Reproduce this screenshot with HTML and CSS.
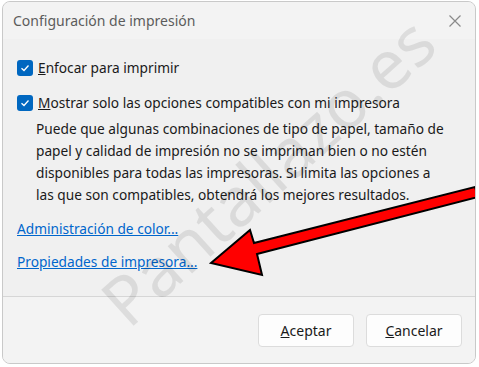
FILE: index.html
```html
<!DOCTYPE html>
<html>
<head>
  <title>Configuración de impresión</title>
  <link rel="stylesheet" href="styles.css">
</head>
<body>

  <div class="window">
    <!-- Title bar -->
    <div class="titlebar">
      <span class="title">Configuración de impresión</span>
      <svg class="close" width="14" height="14" viewBox="0 0 14 14">
        <path d="M1.5 1.5 L12.5 12.5 M12.5 1.5 L1.5 12.5" stroke="#8a8a8a" stroke-width="1.2" fill="none"/>
      </svg>
    </div>

    <!-- Options -->
    <div class="content">
      <label class="check-row">
        <span class="box"><svg width="10" height="8" viewBox="0 0 10 8"><path d="M1.5 4.2 L4 6.5 L8.5 1.5" stroke="#fff" stroke-width="1.3" fill="none"/></svg></span>
        <span><u>E</u>nfocar para imprimir</span>
      </label>

      <label class="check-row second">
        <span class="box"><svg width="10" height="8" viewBox="0 0 10 8"><path d="M1.5 4.2 L4 6.5 L8.5 1.5" stroke="#fff" stroke-width="1.3" fill="none"/></svg></span>
        <span><u>M</u>ostrar solo las opciones compatibles con mi impresora</span>
      </label>

      <p class="desc">Puede que algunas combinaciones de tipo de papel, tamaño de papel y calidad de impresión no se impriman bien o no estén disponibles para todas las impresoras. Si limita las opciones a las que son compatibles, obtendrá los mejores resultados.</p>

      <a class="link first" href="#">Administración de color...</a>
      <a class="link" href="#">Propiedades de impresora...</a>
    </div>

    <!-- Buttons -->
    <div class="footer">
      <button><u>A</u>ceptar</button>
      <button><u>C</u>ancelar</button>
    </div>

    <div class="watermark">Pantallazo.es</div>

    <svg class="arrow" width="479" height="367" viewBox="0 0 479 367">
      <polygon points="211,263 250,230 254,243 475,187 478,197 257,254 262,275"
               fill="#ff0000" stroke="#000" stroke-width="2" stroke-linejoin="miter"/>
    </svg>
  </div>

</body>
</html>
```

FILE: styles.css
```css
body {
  margin: 0;
  background: #fff;
  font-family: "Noto Sans", "Open Sans", sans-serif;
  color: #1a1a1a;
}

.window {
  position: relative;
  margin: 1px 0 0 2px;
  width: 472px;
  height: 361px;
  background: #f0f0f0;
  border: 1px solid #c9c9c9;
  border-radius: 8px;
  display: flex;
  flex-direction: column;
  overflow: hidden;
}

.titlebar {
  height: 37px;
  display: flex;
  align-items: center;
  justify-content: space-between;
  padding: 0 13px 0 10px;
  background: #f3f3f3;
}

.title {
  font-size: 14px;
  color: #5c5c5c;
}

.close {
  display: block;
}

.content {
  flex: 1;
  padding: 18px 14px 0 14px;
  display: flex;
  flex-direction: column;
  align-items: flex-start;
  font-size: 13.7px;
}

.check-row {
  display: flex;
  align-items: center;
  gap: 5px;
  line-height: 22px;
}

.check-row.second {
  margin-top: 13px;
}

.box {
  width: 16px;
  height: 16px;
  border-radius: 3px;
  background: #0067c0;
  display: flex;
  align-items: center;
  justify-content: center;
}

.desc {
  margin: 4px 0 0 19px;
  line-height: 22px;
  width: 415px;
}

.link {
  color: #0066cc;
  text-decoration: underline;
  line-height: 22px;
  margin-top: 11px;
}

.link.first {
  margin-top: 12px;
}

.footer {
  height: 66px;
  border-top: 1px solid #d6d6d6;
  display: flex;
  align-items: center;
  justify-content: flex-end;
  gap: 12px;
  padding-right: 13px;
  background: #f3f3f3;
}

button {
  width: 96px;
  height: 33px;
  background: #fdfdfd;
  border: 1px solid #dcdcdc;
  border-radius: 4px;
  font-family: "Noto Sans", "Open Sans", sans-serif;
  font-size: 14px;
  color: #1a1a1a;
}

.watermark {
  position: absolute;
  left: 108px;
  top: 262px;
  font-size: 68px;
  color: rgba(0, 0, 0, 0.09);
  transform: rotate(-42deg);
  transform-origin: left center;
  white-space: nowrap;
  pointer-events: none;
}

.arrow {
  position: absolute;
  left: -3px;
  top: -2px;
  pointer-events: none;
}
```
